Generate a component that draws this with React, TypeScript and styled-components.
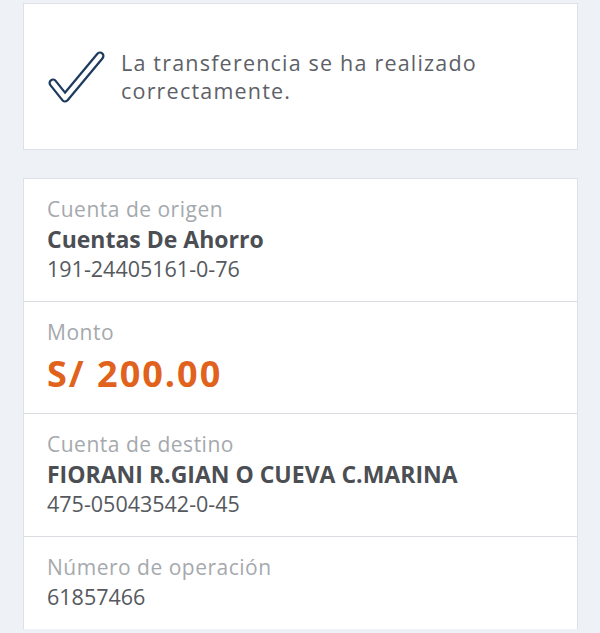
import styled, { createGlobalStyle } from "styled-components";

const GlobalStyle = createGlobalStyle`
  html, body {
    margin: 0;
    padding: 0;
    background: #eef2f6;
  }
  body {
    font-family: "Open Sans", "Noto Sans", sans-serif;
  }
`;

const StyledPage = styled.div`
  width: 600px;
  height: 633px;
  overflow: hidden;
  box-sizing: border-box;
  padding: 3px 22px 0 23px;
  background: #eef2f6;
`;

const StyledSuccessCard = styled.div`
  height: 147px;
  box-sizing: border-box;
  display: flex;
  align-items: center;
  gap: 15px;
  padding-left: 22px;
  background: #ffffff;
  border: 1px solid #dde1e5;
`;

const StyledSuccessText = styled.p`
  margin: 0;
  font-size: 21.5px;
  line-height: 28px;
  color: #5d6167;
  letter-spacing: 1.2px;
`;

const StyledDetailCard = styled.div`
  margin-top: 28px;
  background: #ffffff;
  border: 1px solid #dde1e5;
  border-bottom: none;
`;

const StyledRow = styled.div`
  padding: 15px 23px 17px;
  border-top: 1px solid #dadee2;

  &:first-child {
    border-top: none;
  }
`;

const StyledLabel = styled.div`
  font-size: 21px;
  line-height: 30px;
  letter-spacing: 0.5px;
  color: #a5a9ad;
`;

const StyledName = styled.div`
  font-size: 23px;
  line-height: 30px;
  font-weight: 700;
  color: #4b4e53;
`;

const StyledNumber = styled.div`
  font-size: 21.5px;
  line-height: 30px;
  color: #55595e;
`;

const StyledAmount = styled.div`
  margin-top: 5px;
  font-size: 36px;
  line-height: 44px;
  font-weight: 700;
  letter-spacing: 2px;
  color: #e0621c;
`;

const CheckIcon = () => (
  <svg width="60" height="60" viewBox="0 0 60 60">
    <polyline
      points="7,36 19,51 54,9"
      fill="none"
      stroke="#1d3a5f"
      strokeWidth="9"
      strokeLinecap="round"
      strokeLinejoin="round"
    />
    <polyline
      points="7,36 19,51 54,9"
      fill="none"
      stroke="#ffffff"
      strokeWidth="4.5"
      strokeLinecap="round"
      strokeLinejoin="round"
    />
  </svg>
);

const App = () => {
  return (
    <>
      <GlobalStyle />
      <StyledPage>
        <StyledSuccessCard>
          <CheckIcon />
          <StyledSuccessText>
            La transferencia se ha realizado
            <br />
            correctamente.
          </StyledSuccessText>
        </StyledSuccessCard>

        <StyledDetailCard>
          <StyledRow>
            <StyledLabel>Cuenta de origen</StyledLabel>
            <StyledName>Cuentas De Ahorro</StyledName>
            <StyledNumber>191-24405161-0-76</StyledNumber>
          </StyledRow>
          <StyledRow>
            <StyledLabel>Monto</StyledLabel>
            <StyledAmount>S/ 200.00</StyledAmount>
          </StyledRow>
          <StyledRow>
            <StyledLabel>Cuenta de destino</StyledLabel>
            <StyledName>FIORANI R.GIAN O CUEVA C.MARINA</StyledName>
            <StyledNumber>475-05043542-0-45</StyledNumber>
          </StyledRow>
          <StyledRow>
            <StyledLabel>Número de operación</StyledLabel>
            <StyledNumber>61857466</StyledNumber>
          </StyledRow>
        </StyledDetailCard>
      </StyledPage>
    </>
  );
};

export default App;
